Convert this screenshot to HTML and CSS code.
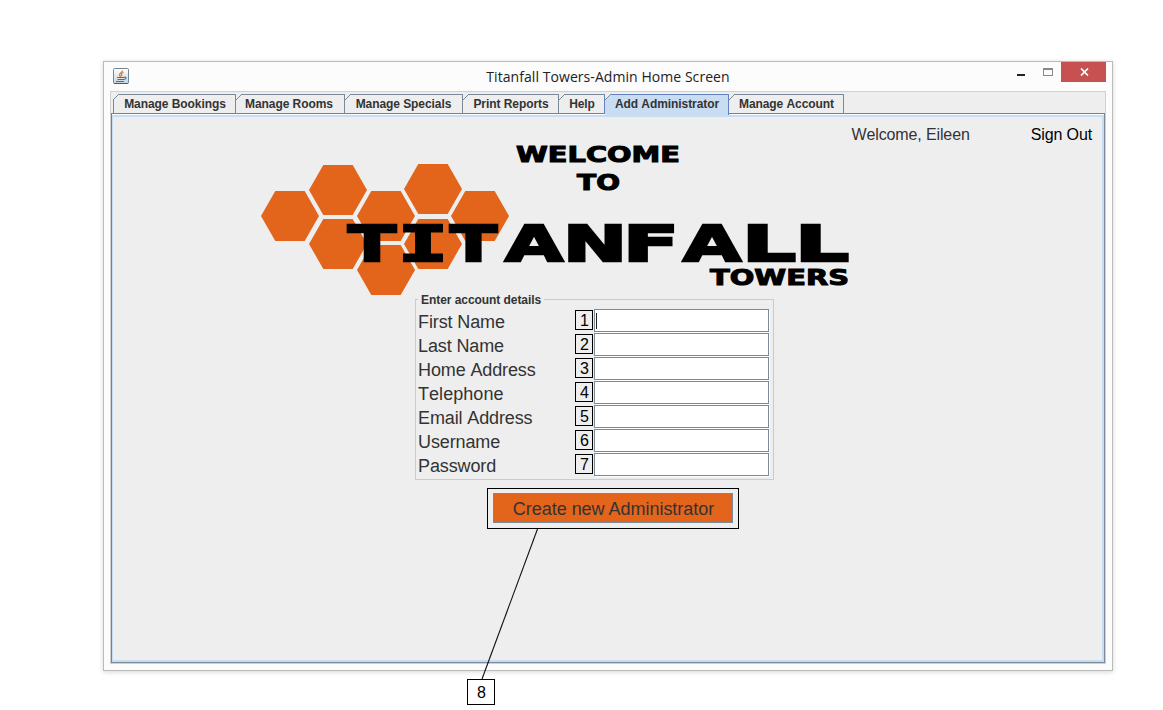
FILE: index.html
```html
<!DOCTYPE html>
<html lang="en">
<head>
<meta charset="utf-8">
<title>Titanfall Towers-Admin Home Screen</title>
<link rel="stylesheet" href="styles.css">
</head>
<body>
<main class="window">
  <header class="titlebar">
    <svg class="java" width="16" height="16" viewBox="0 0 16 16">
      <defs><linearGradient id="jg" x1="0" y1="0" x2="0" y2="1"><stop offset="0" stop-color="#fff"/><stop offset="1" stop-color="#c3d3df"/></linearGradient></defs>
      <rect x=".5" y=".5" width="15" height="15" rx="1" fill="url(#jg)" stroke="#6f8799"/>
      <path d="M1 15.5h14" stroke="#3f6076"/>
      <path d="M9.500 2.500C10 4 6 5 6.500 7c.2 1 1 1.200 1.300 2M10.500 4.500C8 5.500 8 6.500 9 8" fill="none" stroke="#ea7a22" stroke-width="1.300"/>
      <path d="M4 9.500h7M4.500 11.500h6M3 13.500h8M11 9.300c3-.8 2.500 2-.5 2.200" fill="none" stroke="#4b718e" stroke-width="1.100"/>
    </svg>
    <h1 class="title">Titanfall Towers-Admin Home Screen</h1>
    <div class="controls">
      <span class="minimize"></span>
      <span class="maximize"></span>
      <span class="close"><svg width="9" height="8" viewBox="0 0 9 8"><path d="M1 .5l7 7M8 .5l-7 7" stroke="#fff" stroke-width="1.700"/></svg></span>
    </div>
  </header>
  <section class="client">
    <nav class="tabs">
      <span class="tab t1">Manage Bookings</span>
      <span class="tab t2">Manage Rooms</span>
      <span class="tab t3">Manage Specials</span>
      <span class="tab t4">Print Reports</span>
      <span class="tab t5">Help</span>
      <span class="tab t6 active">Add Administrator</span>
      <span class="tab t7">Manage Account</span>
    </nav>
    <div class="panel">
      <div class="account"><span class="welcome">Welcome, Eileen</span><span class="signout">Sign Out</span></div>
      <svg class="logo" width="610" height="154" viewBox="250 143 610 154">
        <defs><path id="hex" d="M-29 0L-14.700-25H14.700L29 0L14.700 25H-14.700Z"/></defs>
        <g fill="#e3641b">
          <use href="#hex" x="290" y="216"/><use href="#hex" x="338" y="190"/>
          <use href="#hex" x="386" y="216"/><use href="#hex" x="433" y="189"/>
          <use href="#hex" x="480" y="216"/><use href="#hex" x="338" y="244"/>
          <use href="#hex" x="433" y="244"/><use href="#hex" x="386" y="270"/>
        </g>
        <g class="brand">
          <text class="small" x="516" y="162" textLength="164" lengthAdjust="spacingAndGlyphs">WELCOME</text>
          <text class="small" x="577" y="190" textLength="43" lengthAdjust="spacingAndGlyphs">TO</text>
          <text class="big" y="261"><tspan x="348" textLength="48" lengthAdjust="spacingAndGlyphs">T</tspan><tspan class="slab" x="398" textLength="50" lengthAdjust="spacingAndGlyphs">I</tspan><tspan x="450" textLength="47" lengthAdjust="spacingAndGlyphs">T</tspan><tspan x="505" textLength="58" lengthAdjust="spacingAndGlyphs">A</tspan><tspan x="563" textLength="64" lengthAdjust="spacingAndGlyphs">N</tspan><tspan x="623" textLength="56" lengthAdjust="spacingAndGlyphs">F</tspan><tspan x="683" textLength="58" lengthAdjust="spacingAndGlyphs">A</tspan><tspan x="742" textLength="54" lengthAdjust="spacingAndGlyphs">L</tspan><tspan x="795" textLength="54" lengthAdjust="spacingAndGlyphs">L</tspan></text>
          <text class="small" x="710" y="285" textLength="139" lengthAdjust="spacingAndGlyphs">TOWERS</text>
        </g>
      </svg>
      <form class="details">
        <div class="legend">Enter account details</div>
        <div class="row"><label>First Name</label><b class="num">1</b><span class="field"><i class="caret"></i></span></div>
        <div class="row"><label>Last Name</label><b class="num">2</b><span class="field"></span></div>
        <div class="row"><label>Home Address</label><b class="num">3</b><span class="field"></span></div>
        <div class="row"><label>Telephone</label><b class="num">4</b><span class="field"></span></div>
        <div class="row"><label>Email Address</label><b class="num">5</b><span class="field"></span></div>
        <div class="row"><label>Username</label><b class="num">6</b><span class="field"></span></div>
        <div class="row"><label>Password</label><b class="num">7</b><span class="field"></span></div>
      </form>
      <div class="callout"><button class="create" type="button">Create new Administrator</button></div>
    </div>
  </section>
</main>
<svg class="leader" width="60" height="152" viewBox="0 0 60 152"><path d="M57.500 1L2 151" stroke="#111" stroke-width="1.100"/></svg>
<div class="note">8</div>
</body>
</html>
```
FILE: styles.css
```css
* { box-sizing: border-box; }
body {
  margin: 0;
  width: 1163px;
  height: 710px;
  padding: 61px 0 0 103px;
  overflow: hidden;
  background: #fff;
  font-family: "Liberation Sans", Arial, sans-serif;
  font-kerning: none;
  color: #333;
}
.window {
  width: 1010px;
  height: 610px;
  padding: 0 6px;
  border: 1px solid #bababa;
  background: #fcfcfc;
  box-shadow: 0 1px 5px rgba(0, 0, 0, .16);
}
.titlebar {
  display: grid;
  grid-template-columns: 100px 1fr 100px;
  height: 29px;
}
.java { margin: 6px 0 0 3px; }
.title {
  margin: 0;
  text-align: center;
  font: 14px/30px "Open Sans", sans-serif;
  font-kerning: normal;
  letter-spacing: .06px;
  color: #222;
  white-space: nowrap;
}
.controls { display: flex; justify-content: flex-end; }
.minimize { width: 8px; height: 2px; margin: 12px 18px 0 0; background: #222; }
.maximize { width: 10px; height: 8px; margin: 6px 8px 0 0; border: 1px solid #888; border-top-width: 2px; }
.close {
  display: flex;
  align-items: center;
  justify-content: center;
  width: 45px;
  height: 20px;
  padding-left: 1px;
  background: #c75050;
}
.client {
  width: 996px;
  height: 573px;
  border: 1px solid #d0d0d0;
  background: #eee;
}
.tabs { display: flex; height: 21px; padding: 2px 0 0 2px; }
.tab {
  position: relative;
  height: 19px;
  padding-left: 1px;
  border-top: 1px solid #7a8a99;
  border-right: 1px solid #7a8a99;
  text-align: center;
  font-weight: bold;
  font-size: 12px;
  line-height: 18px;
  letter-spacing: -.07px;
  white-space: nowrap;
}
.tab::before {
  content: "";
  position: absolute;
  left: 0;
  top: -1px;
  width: 6px;
  height: 6px;
  background: linear-gradient(135deg, #eee 0 43%, #7a8a99 43% 54%, transparent 54%);
}
.t1 { width: 123px; border-left: 1px solid #7a8a99; }
.t1::before { left: -1px; }
.t2 { width: 109px; padding-right: 3px; }
.t3 { width: 118px; padding-left: 0; }
.t4 { width: 96px; }
.t5 { width: 46px; border-right-color: #6382bf; }
.t6 { width: 124px; }
.t7 { width: 115px; }
.active {
  height: 21px;
  border-color: #6382bf;
  background: #c8ddf2;
  z-index: 1;
}
.panel {
  display: flex;
  flex-direction: column;
  height: 550px;
  border: 1px solid #7a8a99;
  border-top-color: #6382bf;
  border-left-color: #6382bf;
  box-shadow: inset 0 1px #f8fbff, inset 0 3px #c8ddf2, inset 1px 0 #c8ddf2, inset -2px -2px #c8ddf2;
}
.account {
  display: flex;
  justify-content: flex-end;
  gap: 61px;
  height: 29px;
  padding: 11px 12px 0 0;
  font-size: 16px;
  line-height: 19px;
  letter-spacing: -.12px;
}
.signout { color: #000; }
.logo { margin-left: 138px; flex: none; }
.brand { font-family: "DejaVu Sans", sans-serif; font-weight: bold; fill: #000; stroke: #000; }
.small { font-size: 20.5px; stroke-width: 1px; }
.big { font-size: 50px; stroke-width: 2.4px; }
.slab { font-family: "DejaVu Sans Mono", monospace; }
.details {
  width: 359px;
  height: 181px;
  margin: 2px 0 0 303px;
  padding: 0 4px 0 2px;
  border: 1px solid #b8cfe5;
  flex: none;
}
.legend {
  width: 126px;
  height: 14px;
  margin: -7px 0 2px;
  padding-left: 3px;
  background: #eee;
  font-weight: bold;
  font-size: 12px;
  line-height: 14px;
  letter-spacing: -.06px;
  white-space: nowrap;
}
.row { display: flex; height: 24px; }
.row label { width: 157px; font-size: 18px; line-height: 26px; letter-spacing: -.12px; }
.row:nth-child(5) label { letter-spacing: .05px; }
.num {
  width: 18px;
  height: 20px;
  margin: 1px 1px 0 0;
  padding-left: 1px;
  border: 1px solid #000;
  color: #000;
  text-align: center;
  font-weight: normal;
  font-size: 16px;
  line-height: 19px;
}
.field {
  width: 175px;
  height: 23px;
  padding: 3px 0 0 1px;
  border: 1px solid #7a8a99;
  background: #fff;
  box-shadow: 1px 1px #fff;
}
.caret { display: block; width: 1px; height: 16px; background: #222; }
.callout {
  width: 252px;
  height: 41px;
  margin: 8px 0 0 375px;
  padding: 4px 5px;
  border: 1px solid #000;
  flex: none;
}
.create {
  display: block;
  width: 240px;
  height: 30px;
  padding: 2px 0 0 1px;
  border: 1px solid #7a8a99;
  background: #e3641b;
  color: #333;
  font: 18px/26px "Liberation Sans", Arial, sans-serif;
  letter-spacing: -.03px;
}
.leader { position: absolute; left: 480px; top: 528px; }
.note {
  position: absolute;
  left: 467px;
  top: 679px;
  width: 28px;
  height: 26px;
  padding-left: 1px;
  border: 1px solid #000;
  background: #fff;
  color: #000;
  text-align: center;
  font-size: 16px;
  line-height: 25px;
}
```
